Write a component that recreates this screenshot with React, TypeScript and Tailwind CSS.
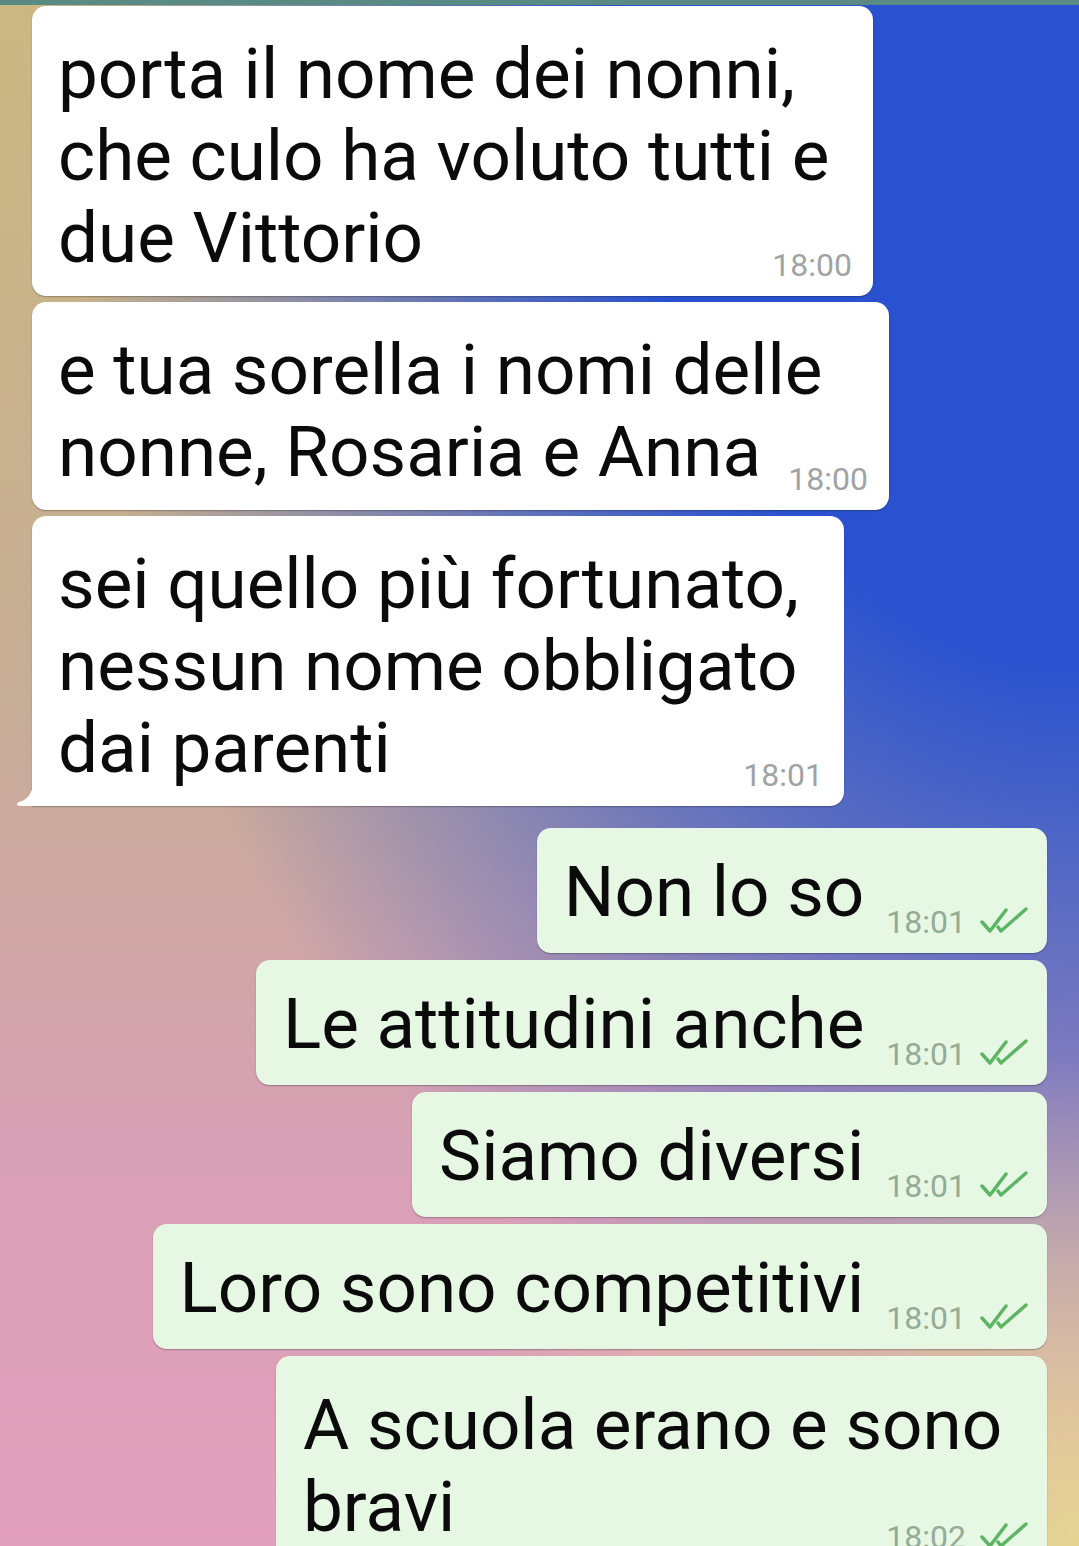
import React from 'react';

type Incoming = { lines: string[]; time: string; w: string; tail?: boolean };
type Outgoing = { lines: string[]; time: string; w?: string; pt?: string };

const incoming: Incoming[] = [
  { lines: ['porta il nome dei nonni,', 'che culo ha voluto tutti e', 'due Vittorio'], time: '18:00', w: 'w-[841px]' },
  { lines: ['e tua sorella i nomi delle', 'nonne, Rosaria e Anna'], time: '18:00', w: 'w-[857px]' },
  { lines: ['sei quello più fortunato,', 'nessun nome obbligato', 'dai parenti'], time: '18:01', w: 'w-[812px]', tail: true },
];

const outgoing: Outgoing[] = [
  { lines: ['Non lo so'], time: '18:01' },
  { lines: ['Le attitudini anche'], time: '18:01' },
  { lines: ['Siamo diversi'], time: '18:01' },
  { lines: ['Loro sono competitivi'], time: '18:01' },
  { lines: ['A scuola erano e sono', 'bravi'], time: '18:02', w: 'w-[771px]', pt: 'pt-[28px]' },
];

function Checks() {
  return (
    <svg
      width="48"
      height="26"
      viewBox="0 0 48 26"
      fill="none"
      stroke="#5db563"
      strokeWidth="3.5"
      strokeLinecap="round"
      strokeLinejoin="round"
      className="-translate-y-[2px]"
    >
      <path d="M2 15 L10 24 L26 3" />
      <path d="M18 20 L21 24 L46 2" />
    </svg>
  );
}

function Tail() {
  // coda del fumetto in basso a sinistra
  return (
    <svg width="18" height="31" viewBox="0 0 18 31" className="absolute left-[-16px] bottom-0">
      <path d="M18 0 C18 17 12 25 3 27 C0 28 0.5 31 4 31 L18 31 Z" fill="#ffffff" />
    </svg>
  );
}

function InBubble({ m }: { m: Incoming }) {
  const last = m.lines.length - 1;
  return (
    <div
      className={`relative bg-white rounded-[14px] pl-[26px] pr-[21px] pt-[27px] pb-[17px] shadow-[0_1px_1.5px_rgba(0,0,0,0.28)] ${m.w} ${
        m.tail ? 'rounded-bl-none' : ''
      }`}
    >
      {m.lines.map((line, i) =>
        i < last ? (
          <div key={i} className="text-[71px] leading-[82px] text-[#0b0b0b] whitespace-nowrap">
            {line}
          </div>
        ) : (
          <div key={i} className="flex items-end justify-between">
            <span className="text-[71px] leading-[82px] text-[#0b0b0b] whitespace-nowrap">{line}</span>
            <span className="text-[32px] leading-[38px] text-[#9ea4a4] translate-y-[5px]">{m.time}</span>
          </div>
        )
      )}
      {m.tail && <Tail />}
    </div>
  );
}

function OutBubble({ m }: { m: Outgoing }) {
  const last = m.lines.length - 1;
  return (
    <div
      className={`bg-[#e6f7e4] rounded-[14px] pl-[27px] pr-[19px] pb-[20px] shadow-[0_1px_1.5px_rgba(0,0,0,0.28)] ${
        m.pt ?? 'pt-[23px]'
      } ${m.w ?? ''}`}
    >
      {m.lines.map((line, i) =>
        i < last ? (
          <div key={i} className="text-[71px] leading-[82px] text-[#0b0b0b] whitespace-nowrap">
            {line}
          </div>
        ) : (
          <div key={i} className="flex items-end justify-between">
            <span className="text-[71px] leading-[82px] text-[#0b0b0b] whitespace-nowrap">{line}</span>
            <span className="ml-[22px] flex items-center gap-[14px] translate-y-[8px]">
              <span className="text-[32px] leading-[38px] text-[#93ab97]">{m.time}</span>
              <Checks />
            </span>
          </div>
        )
      )}
    </div>
  );
}

export default function App() {
  return (
    <div className="w-[1079px] h-[1546px] overflow-hidden font-[Roboto,sans-serif] bg-[image:radial-gradient(ellipse_60%_32%_at_100%_100%,#e4d492_0%,rgba(228,212,146,0)_100%),radial-gradient(ellipse_95%_95%_at_100%_0%,#2a52d0_0%,#2a52d0_45%,rgba(42,82,208,0)_100%),linear-gradient(180deg,#cbb881_0%,#c6ad95_45%,#d8a0b6_75%,#e2a0bc_100%)]">
      <div className="h-[5px] bg-[#5a8a84]" />
      <div className="flex flex-col items-start gap-[6px] pl-[32px] pt-[1px]">
        {incoming.map((m, i) => (
          <InBubble key={i} m={m} />
        ))}
      </div>
      <div className="mt-[22px] flex flex-col items-end gap-[7px] pr-[32px]">
        {outgoing.map((m, i) => (
          <OutBubble key={i} m={m} />
        ))}
      </div>
    </div>
  );
}
